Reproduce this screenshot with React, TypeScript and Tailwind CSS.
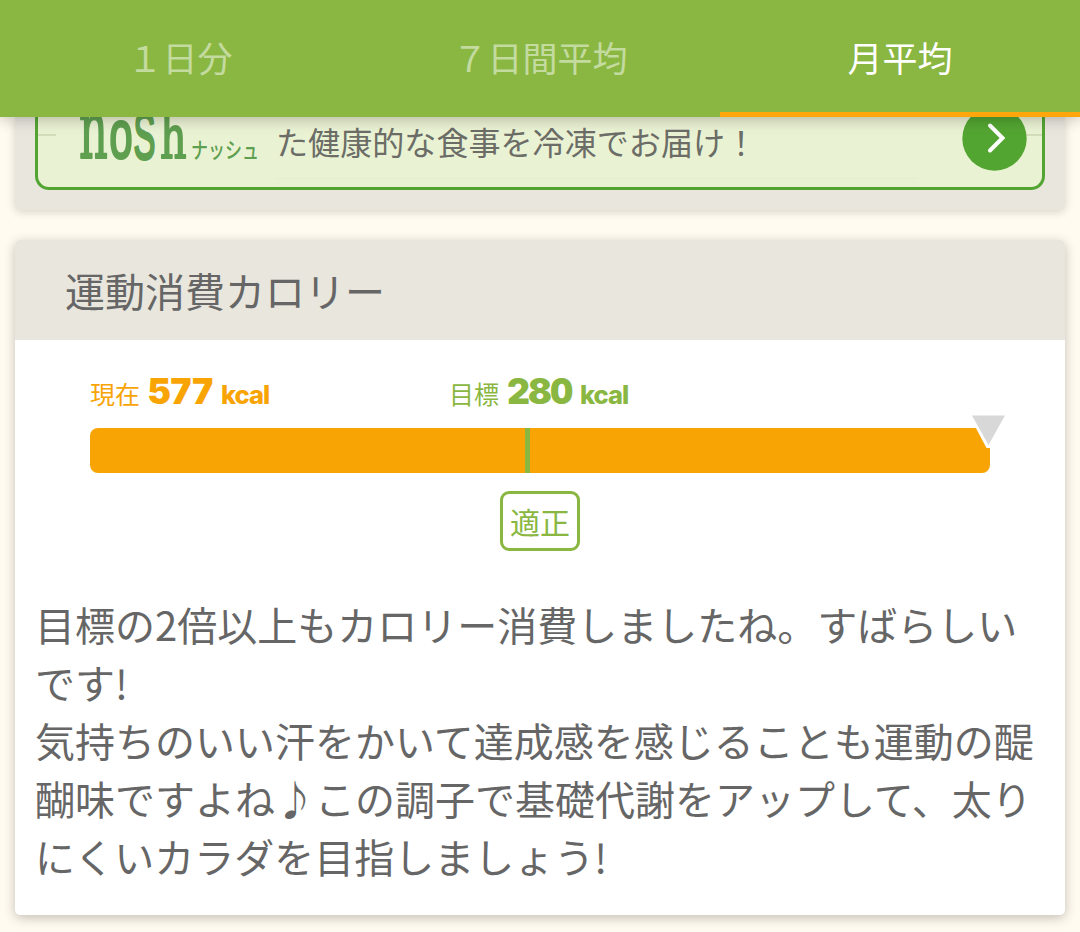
const TABS = [
  { id: 'day', label: '１日分' },
  { id: 'week', label: '７日間平均' },
  { id: 'month', label: '月平均' },
]

const COMMENT = [
  '目標の2倍以上もカロリー消費しましたね。すばらしいです!',
  '気持ちのいい汗をかいて達成感を感じることも運動の醍醐味ですよね♪この調子で基礎代謝をアップして、太りにくいカラダを目指しましょう!',
]

// strokes thicken the letters after the horizontal squeeze
const LOGO_LETTERS = [
  { char: 'n', x: 3, y: 41, sx: 0.54, size: 83, font: 'DejaVu Serif', stroke: 2 },
  { char: 'o', x: 33.5, y: 41, sx: 0.6, size: 69, font: 'Liberation Sans', stroke: 3 },
  { char: 'S', x: 57.5, y: 41.5, sx: 0.49, size: 67, font: 'Liberation Sans', stroke: 3 },
  { char: 'h', x: 84, y: 41, sx: 0.7, size: 59, font: 'DejaVu Serif', stroke: 2 },
]

function TabBar({ active }: { active: string }) {
  return (
    <header className="relative z-10 grid h-[117px] grid-cols-3 bg-[#8ab741] shadow-[0_2px_14px_rgba(0,0,0,0.25)]">
      {TABS.map((tab) => (
        <button
          key={tab.id}
          className={
            tab.id === active
              ? 'border-b-5 border-[#ffa60d] pt-px text-[35px] leading-none text-white'
              : 'border-b-5 border-transparent pt-px text-[35px] leading-none text-white/50'
          }
        >
          {tab.label}
        </button>
      ))}
    </header>
  )
}

function NoshLogo() {
  return (
    <svg width="184" height="70" viewBox="0 0 184 70" className="shrink-0 overflow-visible" fill="#5f9f50">
      {LOGO_LETTERS.map((l) => (
        <text
          key={l.char}
          transform={`translate(${l.x} ${l.y}) scale(${l.sx} 1)`}
          fontFamily={l.font}
          fontSize={l.size}
          stroke="#5f9f50"
          strokeWidth={l.stroke}
          strokeLinejoin="round"
        >
          {l.char}
        </text>
      ))}
      <text
        x="115"
        y="41"
        fontFamily="Noto Sans CJK JP"
        fontWeight="500"
        fontSize="22"
        textLength="68"
        lengthAdjust="spacingAndGlyphs"
      >
        ナッシュ
      </text>
    </svg>
  )
}

function Banner() {
  return (
    <div className="mx-[15px] h-[93px] rounded-b-[5px] bg-[#e9e6de] px-5 shadow-[0_2px_10px_rgba(0,0,0,0.16)]">
      <div className="relative flex h-[73px] rounded-b-[14px] border-x-3 border-b-3 border-[#53a532] bg-[#eaf2d4] pl-[38px]">
        <span className="absolute top-[17px] left-0 h-[2px] w-[18px] bg-[#d3dcbb]" />
        <span className="absolute top-[17px] right-0 h-[2px] w-[18px] bg-[#d3dcbb]" />
        <span className="absolute right-[125px] bottom-[8px] h-px w-[640px] bg-[#e5edcd]" />
        <NoshLogo />
        <p className="ml-[16px] text-[32.1px] leading-[49px] whitespace-nowrap text-[#6b6d66]">
          た健康的な食事を冷凍でお届け！
        </p>
        <svg width="65" height="65" viewBox="0 0 65 65" className="absolute -top-[11px] right-[15px]">
          <circle cx="32.5" cy="32.5" r="32.2" fill="#53a532" />
          <path d="M28 19.500 L40.500 32 L28 44.500" fill="none" stroke="#fff" strokeWidth="4" strokeLinecap="round" />
        </svg>
      </div>
    </div>
  )
}

function Amount({ label, value, className }: { label: string; value: number; className: string }) {
  return (
    <div className={`flex w-[359px] items-baseline whitespace-nowrap ${className}`}>
      <span className="text-[25px] leading-[40px]">{label}</span>
      <span className="ml-[8px] w-[73px] font-[Inter] text-[35.5px] leading-[40px] font-black tracking-[-1.3px] tabular-nums">
        {value}
      </span>
      <span className="font-[Inter] text-[25.5px] leading-[40px] font-extrabold tracking-[-1px]">kcal</span>
    </div>
  )
}

function CalorieGauge() {
  return (
    <div className="px-[75px]">
      <div className="flex h-[56px] items-start">
        <Amount label="現在" value={577} className="text-[#f8a405]" />
        <Amount label="目標" value={280} className="text-[#8ab741]" />
      </div>
      <div className="relative h-[45px] rounded-[8px] bg-[#f8a405]">
        <span className="absolute left-[435px] h-full w-[5px] bg-[#8ab741]" />
        <svg width="42" height="36" viewBox="0 0 42 36" className="absolute -top-[15px] left-[877px]">
          <path d="M1 0 H41 L23 35 H19.500 Z" fill="#fff" />
          <path d="M5 2.500 H38 L21.500 32 Z" fill="#d8d8d8" />
        </svg>
      </div>
      <div className="mx-auto mt-[18px] flex h-[60px] w-20 items-center justify-center rounded-[9px] border-3 border-[#8ab741] text-[30px] leading-none text-[#8ab741]">
        適正
      </div>
    </div>
  )
}

export default function App() {
  return (
    <div
      lang="ja"
      className="h-[932px] w-[1080px] overflow-hidden bg-[#fffbf0] font-['Noto_Sans_CJK_JP',sans-serif] text-[#666]"
    >
      <TabBar active="month" />
      <Banner />
      <section className="mx-[15px] mt-[30px] h-[675px] overflow-hidden rounded-[5px] bg-white shadow-[0_3px_12px_rgba(0,0,0,0.24)]">
        <h2 className="h-[100px] bg-[#e9e6de] pl-[50px] text-[40px] leading-[101px]">運動消費カロリー</h2>
        <div className="pt-[32px]">
          <CalorieGauge />
        </div>
        <div className="mt-[44px] px-5 text-[40px] leading-[58px]">
          {COMMENT.map((line) => (
            <p key={line}>{line}</p>
          ))}
        </div>
      </section>
    </div>
  )
}
